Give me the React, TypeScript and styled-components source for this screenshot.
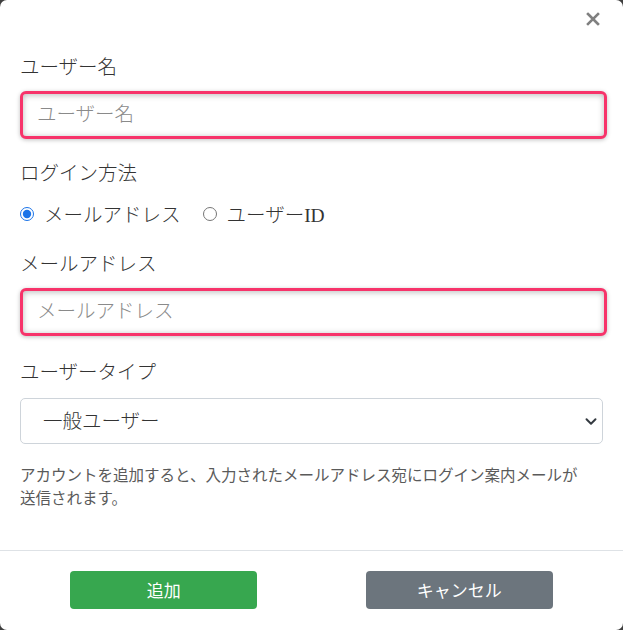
import React from 'react';
import styled, { createGlobalStyle } from 'styled-components';

const GlobalStyle = createGlobalStyle`
  html, body {
    margin: 0;
    padding: 0;
    background: #3f3f3f;
  }
  * {
    box-sizing: border-box;
  }
`;

const SERIF = `"Liberation Serif", "Noto Sans CJK JP", serif`;
const SANS = `"Noto Sans CJK JP", "Noto Sans", sans-serif`;

const App: React.FC = () => {
  return (
    <React.Fragment>
      <GlobalStyle />
      <Modal>
        <CloseRow>
          <CloseButton aria-label="閉じる">
            <svg width="14" height="14" viewBox="0 0 14 14">
              <path d="M2 2 L12 12 M12 2 L2 12" stroke="#808080" strokeWidth="2.6" strokeLinecap="square" />
            </svg>
          </CloseButton>
        </CloseRow>

        <Body>
          <Field $gap={21}>
            <Label>ユーザー名</Label>
            <TextInput type="text" placeholder="ユーザー名" />
          </Field>

          <Field $gap={24}>
            <Label $below={13}>ログイン方法</Label>
            <RadioRow>
              <RadioLabel>
                <Radio type="radio" name="login" defaultChecked />
                メールアドレス
              </RadioLabel>
              <RadioLabel>
                <Radio type="radio" name="login" />
                ユーザーID
              </RadioLabel>
            </RadioRow>
          </Field>

          <Field $gap={23}>
            <Label>メールアドレス</Label>
            <TextInput type="text" placeholder="メールアドレス" />
          </Field>

          <Field $gap={19}>
            <Label $below={12}>ユーザータイプ</Label>
            <SelectWrap>
              <Select defaultValue="general">
                <option value="general">一般ユーザー</option>
                <option value="admin">管理者</option>
              </Select>
              <Chevron width="12" height="9" viewBox="0 0 16 12">
                <path d="M2 3 L8 9 L14 3" fill="none" stroke="#343a40" strokeWidth="2.6" strokeLinecap="round" strokeLinejoin="round" />
              </Chevron>
            </SelectWrap>
          </Field>

          <Help>
            アカウントを追加すると、入力されたメールアドレス宛にログイン案内メールが送信されます。
          </Help>
        </Body>

        <Footer>
          <FooterCell>
            <ActionButton $variant="primary">追加</ActionButton>
          </FooterCell>
          <FooterCell>
            <ActionButton $variant="secondary">キャンセル</ActionButton>
          </FooterCell>
        </Footer>
      </Modal>
    </React.Fragment>
  );
};

const Modal = styled.div`
  width: 623px;
  height: 630px;
  background: #fff;
  border-radius: 7px;
  display: flex;
  flex-direction: column;
  overflow: hidden;
`;

const CloseRow = styled.div`
  height: 38px;
  display: flex;
  justify-content: flex-end;
  align-items: center;
  padding-right: 23px;
`;

const CloseButton = styled.button`
  border: none;
  background: none;
  padding: 0;
  width: 14px;
  height: 14px;
  display: flex;
  cursor: pointer;
`;

const Body = styled.div`
  flex: 1;
  padding: 16px 20px 0;
`;

const Field = styled.div<{ $gap: number }>`
  margin-bottom: ${(p) => p.$gap}px;
`;

const Label = styled.div<{ $below?: number }>`
  font-family: ${SERIF};
  font-size: 19.5px;
  font-weight: 300;
  line-height: 27px;
  color: #333;
  margin-bottom: ${(p) => p.$below ?? 10}px;
`;

const TextInput = styled.input`
  display: block;
  width: calc(100% + 4px);
  height: 48px;
  border: 3px solid #f7336a;
  border-radius: 6px;
  padding: 0 14px;
  font-family: ${SERIF};
  font-size: 19.5px;
  font-weight: 300;
  color: #333;
  outline: none;
  box-shadow: inset 0 1px 6px rgba(0, 0, 0, 0.28), 0 1px 4px rgba(0, 0, 0, 0.25);

  &::placeholder {
    color: #8a8a8a;
  }
`;

const RadioRow = styled.div`
  display: flex;
  align-items: center;
  gap: 22px;
  height: 27px;
`;

const RadioLabel = styled.label`
  display: flex;
  align-items: center;
  gap: 10px;
  font-family: ${SERIF};
  font-size: 19.5px;
  font-weight: 300;
  color: #333;
`;

const Radio = styled.input`
  margin: 0;
  width: 14px;
  height: 14px;
  accent-color: #1a73e8;
`;

const SelectWrap = styled.div`
  position: relative;
`;

const Select = styled.select`
  display: block;
  width: 100%;
  height: 46px;
  appearance: none;
  border: 1px solid #ced4da;
  border-radius: 5px;
  background: #fff;
  padding: 0 40px 0 22px;
  font-family: ${SERIF};
  font-size: 19.5px;
  font-weight: 300;
  color: #333;
  outline: none;
`;

const Chevron = styled.svg`
  position: absolute;
  right: 6px;
  top: 19px;
  pointer-events: none;
`;

const Help = styled.p`
  margin: 0;
  padding-right: 20px;
  font-family: ${SANS};
  font-size: 15.5px;
  font-weight: 400;
  line-height: 23px;
  color: #5a5a5a;
`;

const Footer = styled.div`
  border-top: 1px solid #dee2e6;
  height: 80px;
  display: grid;
  grid-template-columns: 1fr 1fr;
  align-items: center;
  padding: 0 16px 2px;
`;

const FooterCell = styled.div`
  display: flex;
  justify-content: center;
`;

const ActionButton = styled.button<{ $variant: 'primary' | 'secondary' }>`
  width: 187px;
  height: 38px;
  border: none;
  border-radius: 4px;
  background: ${(p) => (p.$variant === 'primary' ? '#37a74f' : '#6c757d')};
  color: #fff;
  font-family: ${SANS};
  font-size: 17px;
  cursor: pointer;
`;

export default App;
